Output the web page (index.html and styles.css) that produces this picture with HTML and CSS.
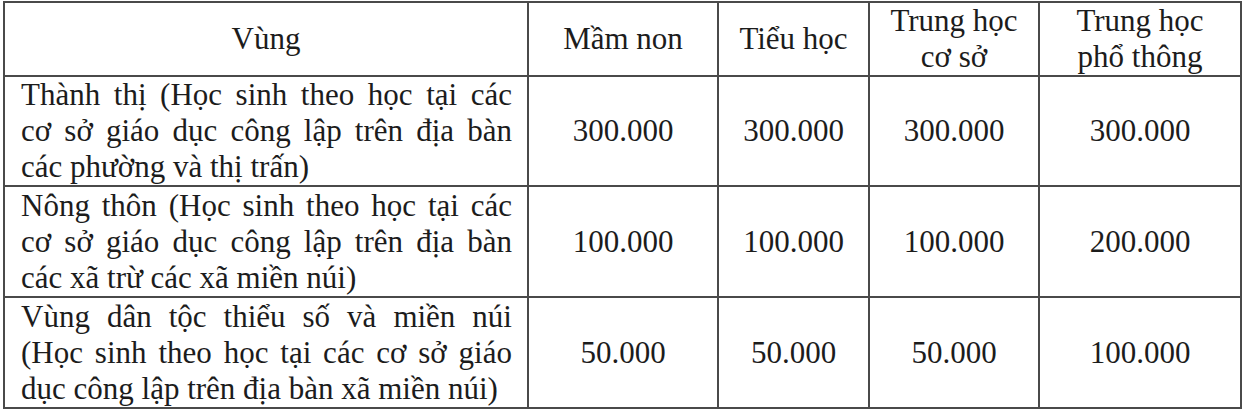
FILE: index.html
```html
<!DOCTYPE html>
<html lang="vi">
<head>
<meta charset="utf-8">
<title>Mức hỗ trợ</title>
<link rel="stylesheet" href="styles.css">
</head>
<body>
<table class="fee">
  <colgroup>
    <col class="c-region">
    <col class="c-mn">
    <col class="c-th">
    <col class="c-thcs">
    <col class="c-thpt">
  </colgroup>
  <thead>
    <tr class="head-row">
      <th>Vùng</th>
      <th>Mầm non</th>
      <th>Tiểu học</th>
      <th>Trung học<br>cơ sở</th>
      <th>Trung học<br>phổ thông</th>
    </tr>
  </thead>
  <tbody>
    <tr class="row-a">
      <td class="region"><span class="ln">Thành thị (Học sinh theo học tại các</span><span class="ln">cơ sở giáo dục công lập trên địa bàn</span><span class="ln last">các phường và thị trấn)</span></td>
      <td>300.000</td>
      <td>300.000</td>
      <td>300.000</td>
      <td>300.000</td>
    </tr>
    <tr class="row-b">
      <td class="region"><span class="ln">Nông thôn (Học sinh theo học tại các</span><span class="ln">cơ sở giáo dục công lập trên địa bàn</span><span class="ln last">các xã trừ các xã miền núi)</span></td>
      <td>100.000</td>
      <td>100.000</td>
      <td>100.000</td>
      <td>200.000</td>
    </tr>
    <tr class="row-b">
      <td class="region"><span class="ln">Vùng dân tộc thiểu số và miền núi</span><span class="ln">(Học sinh theo học tại các cơ sở giáo</span><span class="ln last">dục công lập trên địa bàn xã miền núi)</span></td>
      <td>50.000</td>
      <td>50.000</td>
      <td>50.000</td>
      <td>100.000</td>
    </tr>
  </tbody>
</table>
</body>
</html>
```

FILE: styles.css
```css
html, body {
  margin: 0;
  padding: 0;
  background: #ffffff;
}

body {
  padding: 1px 0 0 3px;
  font-family: "Liberation Serif", "Times New Roman", serif;
  color: #1c1c1c;
}

.fee {
  border-collapse: collapse;
  table-layout: fixed;
  width: 1237px;
  font-size: 31px;
  line-height: 36px;
}

.c-region { width: 524px; }
.c-mn { width: 190px; }
.c-th { width: 151px; }
.c-thcs { width: 170px; }
.c-thpt { width: 202px; }

.fee th,
.fee td {
  border: 2px solid #4a4a4a;
  padding: 0 6px;
  text-align: center;
  vertical-align: middle;
  font-weight: normal;
}

.head-row { height: 74px; }
.row-a { height: 110px; }
.row-b { height: 111px; }

.fee td.region {
  padding: 0 15px 0 16px;
  text-align: justify;
}

.ln {
  display: block;
  text-align: justify;
  text-align-last: justify;
}

.ln.last {
  text-align-last: left;
}
```
